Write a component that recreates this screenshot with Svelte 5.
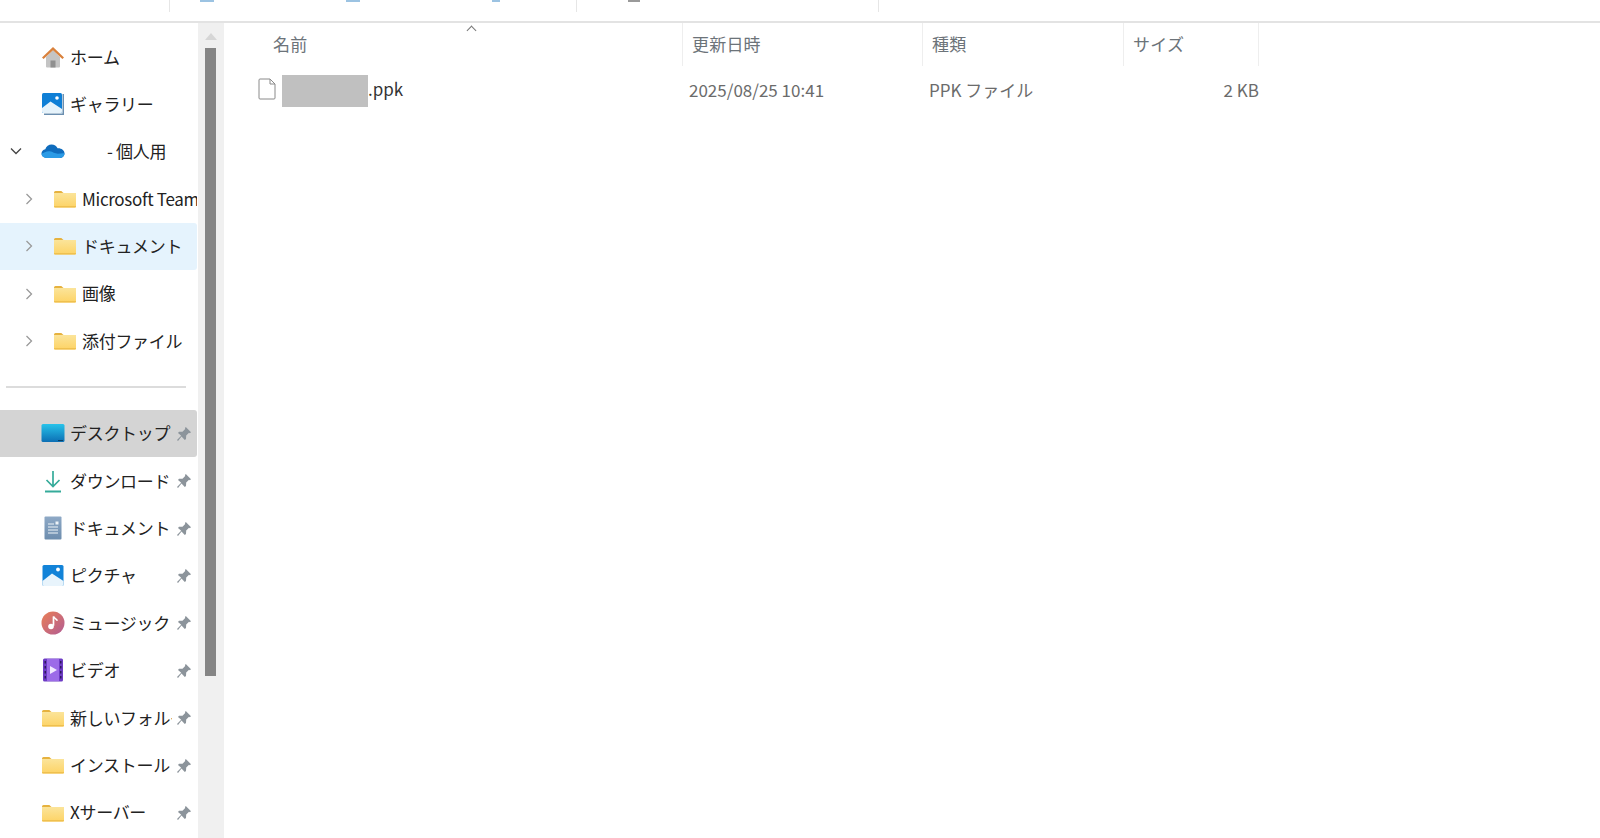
<script>
  const tree = [
    { icon: "home", label: "ホーム" },
    { icon: "gallery", label: "ギャラリー" },
    { icon: "cloud", label: "- 個人用", open: true, cloud: true },
    { icon: "folder", label: "Microsoft Teams Chat Files", nested: true },
    { icon: "folder", label: "ドキュメント", nested: true, hover: true },
    { icon: "folder", label: "画像", nested: true },
    { icon: "folder", label: "添付ファイル", nested: true },
  ]

  const pinned = [
    { icon: "desktop", label: "デスクトップ", active: true },
    { icon: "download", label: "ダウンロード" },
    { icon: "document", label: "ドキュメント" },
    { icon: "picture", label: "ピクチャ" },
    { icon: "music", label: "ミュージック" },
    { icon: "video", label: "ビデオ" },
    { icon: "folder", label: "新しいフォルダー" },
    { icon: "folder", label: "インストール" },
    { icon: "folder", label: "Xサーバー" },
  ]
</script>

{#snippet icon(name)}
  <svg class="icon" viewBox="0 0 24 24" width="24" height="24" aria-hidden="true">
    {#if name === "home"}
      <path d="M5 12v9.5q0 1 1 1h12q1 0 1-1V12L12 5z" fill="#c4c4c4" />
      <path d="M9.5 22.5v-7h5v7z" fill="#8f8f8f" />
      <path d="M1 12.5 12 2l11 10.5-1.6 1.5L12 5.2 2.6 14z" fill="#d9813c" />
    {:else if name === "gallery"}
      <path d="M3 21.5V23h20V2h-1.5v19.5z" fill="#6b8fb0" />
      <rect x="1" y="1" width="20" height="20" rx="1.5" fill="#0f7fd6" />
      <path d="M1 20V16l8.5-6.5L21 17v2.5q0 1.5-1.5 1.5h-17Q1 21 1 19.5z" fill="#e6f3fb" />
      <circle cx="16" cy="6" r="1.8" fill="#fff" />
    {:else if name === "cloud"}
      <path d="M5.5 19C2.5 19 .5 17 .5 14.6c0-2.2 1.6-4 3.8-4.3C5.2 7.3 7.7 5.6 10.6 5.6c2.7 0 5 1.4 6 3.7 3.6-.3 6.9 1.9 6.9 5.2 0 2.6-2.1 4.5-4.7 4.5z" fill="#0f6cbd" />
      <path d="M5.5 19C2.5 19 .5 17 .5 14.8c2.4-.9 5-3 8.3-2.5 3 .5 5 2.400 8 2.400 2.500 0 4.800-.7 6.700-.4 0 2.600-2.100 4.700-4.700 4.700z" fill="#2b9be6" />
    {:else if name === "folder"}
      <path d="M1 5.500q0-1.500 1.500-1.500h5.800l2.200 2H1z" fill="#e6b23f" />
      <path d="M1 6h22v13.500q0 1-1 1H2q-1 0-1-1z" fill="url(#folderFill)" />
      <path d="M1 19h22v.5q0 1-1 1H2q-1 0-1-1z" fill="#efc04f" />
    {:else if name === "desktop"}
      <rect x="0.500" y="3" width="23" height="18" rx="1.500" fill="url(#desktopFill)" />
      <rect x="17" y="19" width="5" height="1" fill="#0b3f63" />
    {:else if name === "download"}
      <path d="M12 2v15M5.500 11l6.500 6.500 6.500-6.500" fill="none" stroke="#35ab9a" stroke-width="1.700" />
      <path d="M4 22.500h16" stroke="#35ab9a" stroke-width="2" />
    {:else if name === "document"}
      <rect x="3.500" y="0.500" width="17" height="23" rx="1" fill="url(#docFill)" />
      <path d="M7 8h6M7 11h10M7 14h10M7 17h10" stroke="#eef3f8" stroke-width="1.200" />
      <rect x="14.500" y="5.500" width="3" height="3" fill="#eef3f8" />
    {:else if name === "picture"}
      <rect x="1.500" y="1" width="21" height="21" rx="1.500" fill="#1283d8" />
      <path d="M1.500 20.500v-3.500L11 9.500 22.500 17v3.500q0 1.500-1.500 1.500H3q-1.500 0-1.500-1.500z" fill="#e8f4fc" />
      <circle cx="17" cy="5.500" r="1.900" fill="#fff" />
    {:else if name === "music"}
      <circle cx="12" cy="12" r="11.500" fill="url(#musicFill)" />
      <path d="M12.500 5.500v9.200" stroke="#fff" stroke-width="1.700" fill="none" />
      <path d="M12.500 5.500c.5 2 3.300 2.200 3.800 4.200" stroke="#fff" stroke-width="1.500" fill="none" />
      <circle cx="10" cy="15.500" r="2.800" fill="#fff" />
    {:else if name === "video"}
      <rect x="2" y="0.500" width="20" height="23" rx="1.500" fill="#6d3bc4" />
      <rect x="6" y="1" width="12" height="22" fill="#9c6be8" />
      <path d="M9 8v8l7-4z" fill="#f1e9ff" />
      <path d="M3.500 3h1.500v2.500H3.500zM3.500 8h1.500v2.500H3.500zM3.500 13h1.500v2.500H3.500zM3.500 18h1.500v2.500H3.500zM19 3h1.500v2.500H19zM19 8h1.500v2.500H19zM19 13h1.500v2.500H19zM19 18h1.500v2.500H19z" fill="#2e1a5e" />
    {/if}
  </svg>
{/snippet}

{#snippet chevron(open)}
  <svg class="chev" class:open viewBox="0 0 12 12" width="12" height="12" aria-hidden="true">
    {#if open}
      <path d="M1 3.500 6 8.500 11 3.500" fill="none" stroke="#444" stroke-width="1.300" />
    {:else}
      <path d="M3.500 1 8.500 6 3.500 11" fill="none" stroke="#9a9a9a" stroke-width="1.300" />
    {/if}
  </svg>
{/snippet}

<svg class="defs" width="0" height="0" aria-hidden="true">
  <defs>
    <linearGradient id="folderFill" x1="0" y1="0" x2="0" y2="1">
      <stop offset="0" stop-color="#fbe49a" />
      <stop offset="1" stop-color="#fdd365" />
    </linearGradient>
    <linearGradient id="desktopFill" x1="0" y1="0" x2="0" y2="1">
      <stop offset="0" stop-color="#27c3ea" />
      <stop offset="1" stop-color="#0c6fb4" />
    </linearGradient>
    <linearGradient id="docFill" x1="0" y1="0" x2="0" y2="1">
      <stop offset="0" stop-color="#8ea9c6" />
      <stop offset="1" stop-color="#6d8dae" />
    </linearGradient>
    <linearGradient id="musicFill" x1="0" y1="0" x2="1" y2="1">
      <stop offset="0" stop-color="#ea7f55" />
      <stop offset="1" stop-color="#b25c94" />
    </linearGradient>
  </defs>
</svg>

<div class="window">
  <div class="toolbar">
    <span class="sep first"></span>
    <div class="tools">
      <i class="stub blue"></i>
      <i class="stub blue"></i>
      <i class="stub blue gap"></i>
      <i class="stub grey"></i>
    </div>
    <span class="sep second"></span>
    <span class="sep third"></span>
  </div>

  <div class="body">
    <nav class="side">
      <div class="tree">
        <ul>
          {#each tree as item}
            <li class="row" class:hover={item.hover} class:nested={item.nested} class:top={!item.nested}>
              <span class="twist">
                {#if item.nested}
                  {@render chevron(false)}
                {:else if item.open}
                  {@render chevron(true)}
                {/if}
              </span>
              {@render icon(item.icon)}
              <span class="label" class:cloud-label={item.cloud}>{item.label}</span>
            </li>
          {/each}
        </ul>
        <div class="rule"></div>
        <ul>
          {#each pinned as item}
            <li class="row pin top" class:active={item.active}>
              <span class="twist"></span>
              {@render icon(item.icon)}
              <span class="label">{item.label}</span>
              <svg class="pinmark" viewBox="0 0 16 16" width="16" height="16" aria-hidden="true">
                <path d="M9.800 1 15 6.200 13.800 7.200 13 6.800 10.200 9.500 10 13 8.800 14 5.500 10.600 2 15 1 14 5.200 9.800 2 7 3 5.800 6.500 5.800 9.200 3 9 2z" fill="#8c949b" />
              </svg>
            </li>
          {/each}
        </ul>
      </div>
      <div class="scrollbar">
        <span class="arrow"></span>
        <span class="thumb"></span>
      </div>
    </nav>

    <main class="files">
      <div class="head">
        <span class="sort"></span>
        <div class="col name">名前</div>
        <div class="col date">更新日時</div>
        <div class="col type">種類</div>
        <div class="col size">サイズ</div>
      </div>
      <div class="file">
        <svg class="page" viewBox="0 0 18 22" width="18" height="22" aria-hidden="true">
          <path d="M1 2q0-1 1-1h10l5 5v14q0 1-1 1H2q-1 0-1-1z" fill="#fff" stroke="#8a8a8a" />
          <path d="M12 1v5h5" fill="none" stroke="#8a8a8a" />
        </svg>
        <div class="fname"><span class="mask"></span><span class="ext">.ppk</span></div>
        <div class="fdate">2025/08/25 10:41</div>
        <div class="ftype">PPK ファイル</div>
        <div class="fsize">2 KB</div>
      </div>
    </main>
  </div>
</div>

<style>
  :global(body) {
    margin: 0;
    background: #fff;
    font-family: "Noto Sans CJK JP", "Noto Sans", sans-serif;
    color: #222;
    overflow: hidden;
  }

  ul {
    list-style: none;
    margin: 0;
    padding: 0;
  }

  .defs {
    position: absolute;
  }

  .window {
    height: 838px;
    display: flex;
    flex-direction: column;
    overflow: hidden;
  }

  .toolbar {
    height: 21px;
    flex: none;
    display: flex;
    border-bottom: 2px solid #e3e3e3;
    position: relative;
  }

  .sep {
    width: 1px;
    height: 12px;
    background: #e6e6e6;
  }

  .sep.first {
    margin-left: 169px;
  }

  .sep.second {
    margin-left: 376px;
  }

  .sep.third {
    margin-left: 301px;
  }

  .tools {
    display: flex;
    gap: 0;
    margin-left: 30px;
    width: 0;
  }

  .stub {
    display: block;
    flex: none;
    height: 2px;
  }

  .stub.blue {
    background: #9cc3e2;
    width: 14px;
    margin-right: 132px;
  }

  .stub.blue.gap {
    width: 8px;
    margin-right: 128px;
  }

  .stub.grey {
    background: #9a9a9a;
    width: 12px;
  }

  .body {
    flex: 1;
    display: flex;
    min-height: 0;
  }

  .side {
    width: 223px;
    flex: none;
    display: flex;
    border-right: 1px solid #f1f1f1;
    box-sizing: border-box;
  }

  .tree {
    width: 197px;
    flex: none;
    padding-top: 10px;
    overflow: hidden;
  }

  .row {
    height: 47.400px;
    display: flex;
    align-items: center;
    font-size: 17px;
    white-space: nowrap;
    border-radius: 0 3px 3px 0;
    box-sizing: border-box;
  }

  .row.hover {
    background: #e5f3fd;
  }

  .row.active {
    background: #d4d4d4;
  }

  .twist {
    width: 41px;
    flex: none;
    display: flex;
    align-items: center;
    justify-content: flex-start;
  }

  .row.nested .twist {
    width: 53px;
    padding-left: 23px;
    box-sizing: border-box;
  }

  .row.top .twist {
    padding-left: 10px;
    box-sizing: border-box;
  }

  .icon {
    flex: none;
  }

  .label {
    margin-left: 5px;
    letter-spacing: -0.3px;
    overflow: hidden;
    flex: 1;
    min-width: 0;
  }

  .row.nested .label {
    margin-left: 5px;
  }

  .cloud-label {
    margin-left: 42px;
  }

  .pin .label {
    flex: 0 0 102px;
  }

  .pinmark {
    flex: none;
    margin-left: 4px;
    margin-top: 1px;
  }

  .rule {
    height: 2px;
    background: #dcdcdc;
    margin: 21px 11px 22px 6px;
    width: 180px;
  }

  .scrollbar {
    width: 26px;
    flex: none;
    background: #f0f0f0;
    margin-left: 1px;
    display: flex;
    flex-direction: column;
    align-items: center;
    padding-top: 10px;
    box-sizing: border-box;
  }

  .arrow {
    width: 0;
    height: 0;
    border-left: 6px solid transparent;
    border-right: 6px solid transparent;
    border-bottom: 7px solid #d6d6d6;
    margin-bottom: 8px;
  }

  .thumb {
    width: 11px;
    height: 628px;
    background: #858585;
    margin-left: -1px;
  }

  .files {
    flex: 1;
    min-width: 0;
    position: relative;
  }

  .head {
    display: flex;
    height: 43px;
    font-size: 17px;
    color: #6c7379;
  }

  .col {
    box-sizing: border-box;
    padding-left: 9px;
    display: flex;
    align-items: center;
    border-right: 1px solid #eee;
    letter-spacing: 0.2px;
  }

  .col.name {
    width: 460px;
    padding-left: 50px;
  }

  .col.date {
    width: 240px;
  }

  .col.type {
    width: 201px;
  }

  .col.size {
    width: 135px;
  }

  .sort {
    position: absolute;
    left: 245px;
    top: 4px;
    width: 6px;
    height: 6px;
    border-left: 1px solid #777;
    border-top: 1px solid #777;
    transform: rotate(45deg);
  }

  .file {
    display: flex;
    align-items: center;
    height: 49px;
    font-size: 17px;
    color: #6b6b6b;
    position: relative;
  }

  .page {
    flex: none;
    margin-left: 35px;
    margin-top: -4px;
  }

  .fname {
    display: flex;
    align-items: center;
    width: 407px;
    margin-left: 6px;
    color: #333;
    flex: none;
  }

  .mask {
    width: 86px;
    height: 32px;
    background: #c0c0c0;
    flex: none;
  }

  .ext {
    margin-top: -3px;
  }

  .fdate {
    width: 240px;
    flex: none;
  }

  .ftype {
    width: 207px;
    flex: none;
  }

  .fsize {
    width: 123px;
    flex: none;
    text-align: right;
  }

  .row .label, .col, .file > div {
    line-height: 1.2;
  }
</style>
